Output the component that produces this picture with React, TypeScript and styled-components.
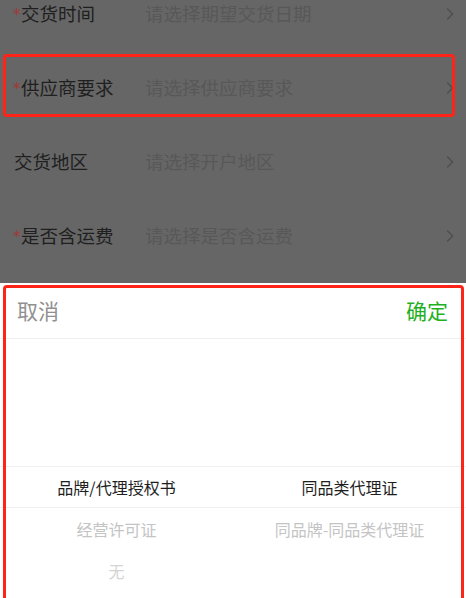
import React from "react";
import styled, { createGlobalStyle } from "styled-components";

const GlobalStyle = createGlobalStyle`
  html, body {
    margin: 0;
    padding: 0;
    background: #ffffff;
    overflow: hidden;
  }
  body {
    font-family: "Noto Sans CJK SC", "Noto Sans", sans-serif;
  }
`;

const Page = styled.div`
  width: 466px;
  height: 598px;
  display: flex;
  flex-direction: column;
  overflow: hidden;
`;

// the form behind the popup, already dimmed by the mask
const Backdrop = styled.div`
  height: 283px;
  flex-shrink: 0;
  background: #666666;
  overflow: hidden;
`;

const FormList = styled.div`
  display: flex;
  flex-direction: column;
  margin-top: -23.5px;
`;

const FieldRow = styled.div`
  position: relative;
  height: 74px;
  display: flex;
  align-items: center;
  padding: 0 12px 0 14px;
  font-size: 18.5px;
  line-height: 1;
`;

const Label = styled.div`
  width: 131px;
  flex-shrink: 0;
  display: flex;
  align-items: center;
  color: #1f1f1f;
`;

const Star = styled.span`
  width: 8px;
  color: #a03a36;
  font-family: "DejaVu Sans", sans-serif;
  font-size: 15px;
  margin-top: 3px;
  margin-left: -1px;
`;

const Placeholder = styled.div`
  flex: 1;
  color: #585858;
`;

const Chevron = styled.svg`
  width: 8px;
  height: 14px;
  flex-shrink: 0;
`;

const Highlight = styled.div`
  position: absolute;
  top: 3.5px;
  bottom: 7.5px;
  left: 3px;
  right: 11.5px;
  border: 3px solid #ff2418;
  border-radius: 4px;
  pointer-events: none;
`;

const Sheet = styled.div`
  position: relative;
  flex: 1;
  background: #ffffff;
  display: flex;
  flex-direction: column;
`;

const SheetHeader = styled.div`
  height: 55px;
  display: flex;
  align-items: center;
  justify-content: space-between;
  padding: 0 18px 0 17px;
  border-bottom: 1px solid #efefef;
  font-size: 21px;
  line-height: 1;
`;

const HeaderAction = styled.span<{ $primary?: boolean }>`
  color: ${(p) => (p.$primary ? "#1fb01f" : "#909090")};
`;

const PickerBody = styled.div`
  display: grid;
  grid-template-columns: 1fr 1fr;
  padding-top: 127px;
`;

const PickerColumn = styled.div`
  display: flex;
  flex-direction: column;
`;

const PickerItem = styled.div<{ $tone: number }>`
  height: 42px;
  display: flex;
  align-items: center;
  justify-content: center;
  font-size: 16px;
  line-height: 1;
  color: ${(p) => ["#1e1e1e", "#c4c4c4", "#d4d4d4"][p.$tone]};
  box-sizing: border-box;
  ${(p) =>
    p.$tone === 0 &&
    `
    border-top: 1px solid #f0f0f0;
    border-bottom: 1px solid #f0f0f0;
  `}
`;

const SheetHighlight = styled.div`
  position: absolute;
  top: 2px;
  left: 3px;
  right: 2px;
  bottom: -10px;
  border: 3px solid #ff2418;
  border-radius: 4px;
  pointer-events: none;
`;

const fields = [
  { label: "交货时间", placeholder: "请选择期望交货日期", required: true },
  { label: "供应商要求", placeholder: "请选择供应商要求", required: true, marked: true },
  { label: "交货地区", placeholder: "请选择开户地区", required: false },
  { label: "是否含运费", placeholder: "请选择是否含运费", required: true },
];

const columns = [
  ["品牌/代理授权书", "经营许可证", "无"],
  ["同品类代理证", "同品牌-同品类代理证"],
];

const App = () => {
  return (
    <Page>
      <GlobalStyle />
      <Backdrop>
        <FormList>
          {fields.map((f) => (
            <FieldRow key={f.label}>
              <Label>
                {f.required && <Star>*</Star>}
                {f.label}
              </Label>
              <Placeholder>{f.placeholder}</Placeholder>
              <Chevron viewBox="0 0 8 14">
                <polyline
                  points="1.2,1.5 6.6,7 1.2,12.5"
                  fill="none"
                  stroke="#4e4e4e"
                  strokeWidth="1.4"
                />
              </Chevron>
              {f.marked && <Highlight />}
            </FieldRow>
          ))}
        </FormList>
      </Backdrop>
      <Sheet>
        <SheetHeader>
          <HeaderAction>取消</HeaderAction>
          <HeaderAction $primary>确定</HeaderAction>
        </SheetHeader>
        <PickerBody>
          {columns.map((col, ci) => (
            <PickerColumn key={ci}>
              {col.map((item, i) => (
                <PickerItem key={item} $tone={Math.min(i, 2)}>
                  {item}
                </PickerItem>
              ))}
            </PickerColumn>
          ))}
        </PickerBody>
        <SheetHighlight />
      </Sheet>
    </Page>
  );
};

export default App;
